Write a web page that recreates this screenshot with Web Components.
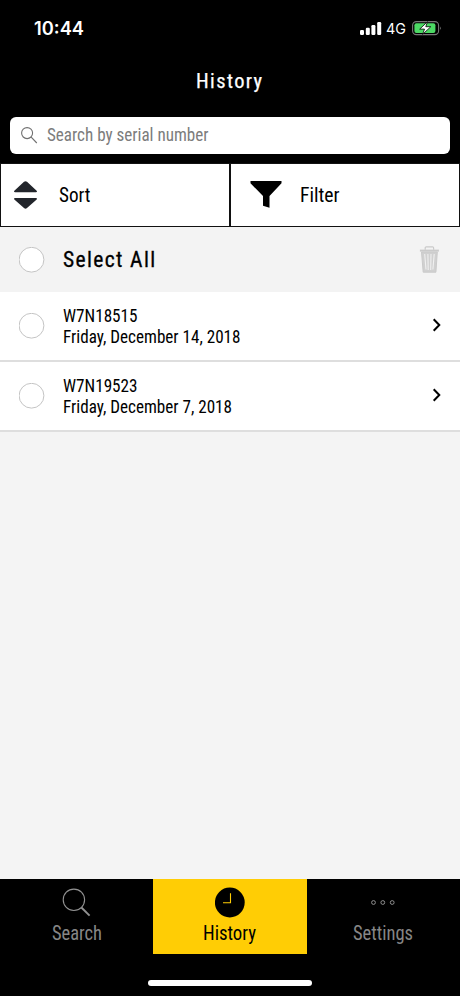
<!DOCTYPE html>
<html lang="en">
<head>
<meta charset="utf-8">
<title>History</title>
<style>
html,body{margin:0;background:#f4f4f4}
body{width:460px;height:996px;overflow:hidden;font-family:"Roboto Condensed",Roboto,sans-serif}
</style>
</head>
<body>
<history-app></history-app>
<script>
const define = (name, html, setup) => customElements.define(name, class extends HTMLElement {
  constructor() {
    super();
    this.attachShadow({mode: 'open'});
  }
  connectedCallback() {
    this.shadowRoot.innerHTML = html;
    if (setup) setup(this, this.shadowRoot);
  }
});

/* A single line of text fitted to a given width. */
define('fit-text', `
<style>:host{display:block;flex:none}svg{display:block;overflow:visible}text{fill:currentColor;font-stretch:75%;stroke:currentColor;stroke-width:var(--thicken,0)}</style>
<svg><text x="0" lengthAdjust="spacingAndGlyphs"></text></svg>`, (el, root) => {
  const w = el.getAttribute('w'), size = +el.getAttribute('size');
  const svg = root.querySelector('svg'), t = root.querySelector('text');
  svg.setAttribute('width', w);
  svg.setAttribute('height', size);
  t.setAttribute('y', size * 0.855);
  t.setAttribute('textLength', w);
  t.style.fontSize = size + 'px';
  t.style.letterSpacing = (el.getAttribute('spacing') || 0) + 'px';
  t.textContent = el.getAttribute('text');
});

define('status-bar', `
<style>
:host{display:flex;height:58px;box-sizing:border-box;padding:20px 18px 0 34px;color:#fff;font-family:Inter,sans-serif;justify-content:space-between;align-items:flex-start}
.time{font-weight:600}
.right{display:flex;align-items:flex-start}
.net{margin:1.4px 6px 0 4.3px}
</style>
<fit-text class="time" text="10:44" w="50" size="18"></fit-text>
<div class="right">
<svg width="22" height="18" fill="#fff"><rect x="0" y="10" width="4" height="5" rx="1.2"/><rect x="5.8" y="7.8" width="4" height="7.2" rx="1.2"/><rect x="11.4" y="5" width="4" height="10" rx="1.2"/><rect x="17.2" y="2" width="4" height="13" rx="1.2"/></svg>
<fit-text class="net" text="4G" w="20" size="15"></fit-text>
<svg width="30" height="18"><rect x=".6" y="1.6" width="26" height="13" rx="3.8" fill="none" stroke="#777" stroke-width="1.1"/><rect x="2.4" y="3.3" width="21" height="9.7" rx="2" fill="#4cd964"/><path d="M28.2 6.4q1.6 1.7 0 3.5z" fill="#888"/><path d="M15.5 1.7 7.7 9.1h4.8l-1.9 5.3 8.2-7.7h-5z" fill="#fff" stroke="#000" stroke-width=".8"/></svg>
</div>`);

define('search-box', `
<style>:host{display:flex;box-sizing:border-box;height:37px;margin:0 10px;background:#fff;border-radius:6px;padding:9.6px 0 0 11px;color:#7c7c7c;gap:8.7px}</style>
<svg width="17" height="18" fill="none" stroke="#707070" stroke-width="1.1"><circle cx="6.1" cy="7.1" r="5.5"/><path d="M10.2 11.2 15.8 17"/></svg>
<fit-text text="Search by serial number" w="161.5" size="17.5"></fit-text>`);

define('tool-button', `
<style>:host{display:flex;flex:1;box-sizing:border-box;height:64px;border:solid #111;border-width:1px 1px 1.5px;background:#fff;color:#000}</style>
<slot></slot>`);

define('check-circle', `
<style>:host{display:block;flex:none}svg{display:block}</style>
<svg width="26" height="26"><circle cx="12.5" cy="12.7" r="12.4" fill="#fff" stroke="#c4c4c4"/></svg>`);

define('select-row', `
<style>:host{display:flex;height:65px;box-sizing:border-box;padding:19.5px 19.5px 0 18.5px;background:#f3f3f3}
fit-text{margin:1px 0 0 18px;--thicken:.3px}.bin{margin:-1.8px 0 0 auto}</style>
<check-circle></check-circle><fit-text text="Select All" w="93.5" size="22.5" spacing="1.4"></fit-text>
<svg class="bin" width="22" height="30" fill="none" stroke="#cacaca"><g transform="translate(-.5 0)"><path d="M6.7 4.8V2.8q0-.9 1-.9h6.4q1 0 1 .9v2" stroke-width="1.2"/><path d="M1.4 5.6h19" stroke-width="2"/><path d="M3 7h15.8L17.4 27.2H4.7z" fill="#d0d0d0" stroke-width="1"/><path d="M6.2 9 7.5 24.5M9.4 9l.3 16M12.5 9l-.3 16M15.7 9l-1.3 15.5" stroke="#f0f0f0" stroke-width="1.1"/></g></svg>`);

define('history-row', `
<style>:host{display:flex;height:70px;box-sizing:border-box;background:#fff;border-bottom:2px solid #dedede;padding:21px 18px 0 18.5px}
.lines{display:grid;gap:3.3px;margin:-6.4px 0 0 18px;align-content:start}
.go{margin:4px 0 0 auto}</style>
<check-circle></check-circle><div class="lines"></div>
<svg class="go" width="10" height="16" fill="none" stroke="#000" stroke-width="2"><path d="m1.7 2.2 5.6 5.8-5.6 5.8"/></svg>`, (el, root) => {
  root.querySelector('.lines').innerHTML =
    `<fit-text text="${el.getAttribute('serial')}" w="74.5" size="17.7"></fit-text>` +
    `<fit-text text="${el.getAttribute('date')}" w="${el.getAttribute('date-width')}" size="17.7"></fit-text>`;
});

define('tab-item', `
<style>:host{display:flex;flex:1;height:75px;flex-direction:column;align-items:center;color:#868686;box-sizing:border-box;padding-top:8px;gap:5.2px}
:host([active]){background:#ffcd05;color:#000}</style>
<slot></slot><fit-text></fit-text>`, (el, root) => {
  const old = root.querySelector('fit-text'), t = document.createElement('fit-text');
  t.setAttribute('text', el.getAttribute('label'));
  t.setAttribute('w', el.getAttribute('w'));
  t.setAttribute('size', '19.3');
  old.replaceWith(t);
});

define('tab-bar', `
<style>:host{display:flex;flex-direction:column;height:117px;background:#000;align-items:center}
.tabs{display:flex;align-self:stretch}svg{display:block}.home{width:164px;height:6px;border-radius:3px;background:#fff;margin-top:26px}</style>
<div class="tabs">
<tab-item label="Search" w="50"><svg width="30" height="31" fill="none" stroke="#929292"><circle cx="11.9" cy="12.8" r="10.7" stroke-width="1.1"/><path d="m19.4 20.5 8.2 8.2" stroke-width="1.9"/></svg></tab-item>
<tab-item active label="History" w="53"><svg width="30" height="31"><circle cx="14.8" cy="15.5" r="14.9" fill="#000"/><path d="M15.5 6.2v9.5H8" fill="none" stroke="#ffcd05" stroke-width="1.1"/></svg></tab-item>
<tab-item label="Settings" w="60"><svg width="26" height="31" fill="none" stroke="#909090"><circle cx="3.5" cy="15.5" r="1.9"/><circle cx="12.8" cy="15.5" r="1.9"/><circle cx="22.2" cy="15.5" r="1.9"/></svg></tab-item>
</div><div class="home"></div>`);

define('history-app', `
<style>
:host{display:flex;flex-direction:column;width:460px;height:996px;background:#f4f4f4}
header{height:163px;background:#000;color:#fff}
.title{display:flex;justify-content:center;height:58.6px;box-sizing:border-box;padding:12px 0 0 0;--thicken:.25px}
.tools{display:flex;background:#000;height:64px}
.sort{margin:17.4px 0 0 12px}.filter{margin:17.2px 0 0 19.3px}
.st{margin:21px 0 0 21px}.ft{margin:21px 0 0 17.5px}
main{flex:1}
</style>
<header><status-bar></status-bar><div class="title"><fit-text text="History" w="67.5" size="20.5" spacing="1.4"></fit-text></div><search-box></search-box></header>
<div class="tools">
<tool-button><svg class="sort" width="25" height="29" fill="#22252b"><path d="M11 .8q1.5-1.1 3 0l9.4 8.7q1.4 1.5-.5 1.8H2.1Q.2 11 1.6 9.5zM11 27.1q1.5 1.1 3 0l9.4-8.4q1.4-1.5-.5-1.8H2.1q-1.9.3-.5 1.8z"/></svg><fit-text class="st" text="Sort" w="31.5" size="20"></fit-text></tool-button>
<tool-button><svg class="filter" width="32" height="29"><path d="M.5 0h31v2.3L19.5 15v11.8l-6.5-2V15L.5 2.3z"/></svg><fit-text class="ft" text="Filter" w="39.5" size="20"></fit-text></tool-button>
</div>
<main><select-row></select-row>
<history-row serial="W7N18515" date="Friday, December 14, 2018" date-width="177.5"></history-row>
<history-row serial="W7N19523" date="Friday, December 7, 2018" date-width="169"></history-row></main>
<tab-bar></tab-bar>`);
</script>
</body>
</html>
